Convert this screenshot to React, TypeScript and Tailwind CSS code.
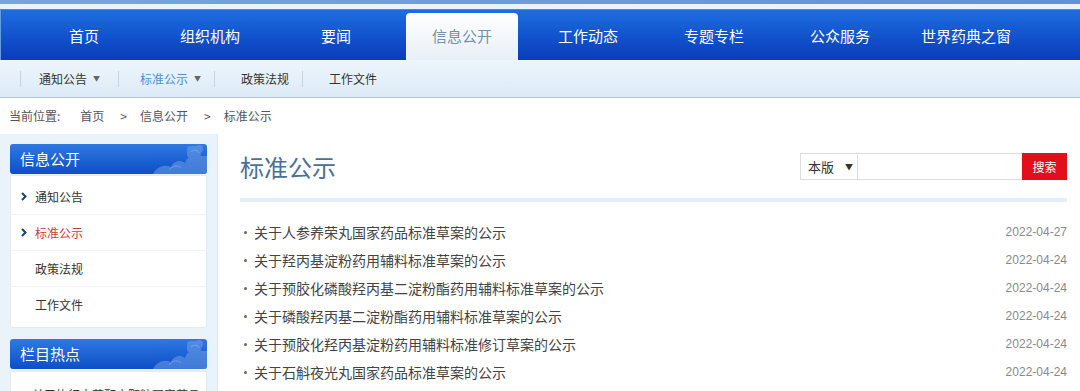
const navItems = ['首页', '组织机构', '要闻', '信息公开', '工作动态', '专题专栏', '公众服务', '世界药典之窗'];

const news = [
  { title: '关于人参养荣丸国家药品标准草案的公示', date: '2022-04-27' },
  { title: '关于羟丙基淀粉药用辅料标准草案的公示', date: '2022-04-24' },
  { title: '关于预胶化磷酸羟丙基二淀粉酯药用辅料标准草案的公示', date: '2022-04-24' },
  { title: '关于磷酸羟丙基二淀粉酯药用辅料标准草案的公示', date: '2022-04-24' },
  { title: '关于预胶化羟丙基淀粉药用辅料标准修订草案的公示', date: '2022-04-24' },
  { title: '关于石斛夜光丸国家药品标准草案的公示', date: '2022-04-24' },
];

const sideItems = [
  { label: '通知公告', arrow: true, active: false },
  { label: '标准公示', arrow: true, active: true },
  { label: '政策法规', arrow: false, active: false },
  { label: '工作文件', arrow: false, active: false },
];

function Cloud() {
  return (
    <svg width="60" height="30" viewBox="0 0 60 30" className="absolute right-0 top-0">
      <g fill="#6d9fe8" opacity="0.55">
        <path d="M6 30 C10 22 18 20 24 23 C26 17 34 15 38 19 C40 12 48 8 54 12 L60 12 L60 30 Z" />
        <rect x="40" y="2" width="14" height="12" rx="4" />
        <circle cx="52" cy="5" r="4" />
      </g>
      <g fill="none" stroke="#8fb6ee" strokeWidth="1" opacity="0.6">
        <path d="M22 26 C26 21 31 21 34 24" />
        <path d="M44 8 C47 5 51 6 52 9" />
      </g>
    </svg>
  );
}

function Chevron() {
  return (
    <svg width="6" height="9" viewBox="0 0 6 9">
      <path d="M1 1 L4.5 4.5 L1 8" fill="none" stroke="#1c3f78" strokeWidth="2" />
    </svg>
  );
}

function SideHeader({ title }: { title: string }) {
  return (
    <div className="relative flex h-[30px] items-center overflow-hidden rounded-[3px] bg-gradient-to-b from-[#2f79e2] to-[#0f4ec6] pl-[10px] text-[15px] text-white">
      {title}
      <Cloud />
    </div>
  );
}

function Caret() {
  return <span className="ml-[6px] text-[7px] text-[#666]">▼</span>;
}

export default function App() {
  return (
    <div
      className="h-[391px] w-[1080px] overflow-hidden bg-white"
      style={{ fontFamily: '"Noto Sans CJK SC", "Liberation Sans", sans-serif' }}
    >
      {/* top strip */}
      <div className="h-[4px] bg-gradient-to-r from-[#79a5dc] to-[#5f92d6]" />
      <div className="h-[5px] bg-[#e8f3fc]" />
      <div className="h-[1px] bg-[#4f86d0]" />

      {/* main nav */}
      <div className="flex h-[50px] items-end border-l border-[#6a9ae0] bg-gradient-to-b from-[#1f6ce0] to-[#0b3bbb] px-[20px]">
        {navItems.map((n) => (
          <div key={n} className="flex h-[47px] w-[126px] justify-center">
            {n === '信息公开' ? (
              <div className="flex w-[112px] items-center justify-center rounded-t-[4px] bg-gradient-to-b from-white to-[#e9eff6] text-[15px] text-[#7290b2]">
                {n}
              </div>
            ) : (
              <div className="flex items-center text-[15px] text-white">{n}</div>
            )}
          </div>
        ))}
      </div>

      {/* sub nav */}
      <div className="flex h-[38px] items-center border-b border-[#b3c7dc] bg-gradient-to-b from-[#eef6fd] to-[#dceaf7] pl-[20px] text-[12px] text-[#333]">
        <span className="h-[16px] w-px bg-[#c4d4e4]" />
        <span className="ml-[18px] flex items-center">通知公告<Caret /></span>
        <span className="ml-[18px] h-[16px] w-px bg-[#c4d4e4]" />
        <span className="ml-[21px] flex items-center text-[#4a92d4]">标准公示<Caret /></span>
        <span className="ml-[13px] h-[16px] w-px bg-[#c4d4e4]" />
        <span className="ml-[26px]">政策法规</span>
        <span className="ml-[13px] h-[16px] w-px bg-[#c4d4e4]" />
        <span className="ml-[26px]">工作文件</span>
      </div>

      {/* breadcrumb */}
      <div className="flex h-[36px] items-center pl-[9px] text-[12px] text-[#555]">
        <span>当前位置:</span>
        <span className="ml-[20px]">首页</span>
        <span className="ml-[16px]">&gt;</span>
        <span className="ml-[13px]">信息公开</span>
        <span className="ml-[16px]">&gt;</span>
        <span className="ml-[13px]">标准公示</span>
      </div>

      {/* body */}
      <div className="flex">
        {/* sidebar */}
        <div className="w-[218px] shrink-0 border-r border-[#dbe7f3] bg-[#eaf2fa] px-[10px] pt-[10px]">
          <SideHeader title="信息公开" />
          <div className="mt-[1px] rounded-b-[3px] border border-[#e2eaf3] bg-white pb-[4px] pt-[3px]">
            {sideItems.map((s, i) => (
              <div
                key={s.label}
                className={`flex h-[36px] items-center pl-[10px] text-[12px] ${i < 3 ? 'border-b border-[#f0f3f7]' : ''}`}
              >
                <span className="flex w-[14px] items-center">{s.arrow ? <Chevron /> : null}</span>
                <span className={s.active ? 'text-[#d23a3a]' : 'text-[#333]'}>{s.label}</span>
              </div>
            ))}
          </div>
          <div className="mt-[11px]">
            <SideHeader title="栏目热点" />
          </div>
          <div className="mt-[2px] border border-[#e2eaf3] bg-white pt-[14px]">
            <div className="flex items-center pl-[10px] text-[12px] text-[#333]">
              <span className="mr-[8px] h-[3px] w-[3px] rounded-full bg-[#666]" />
              关于执行中药配方颗粒国家药品
            </div>
          </div>
        </div>

        {/* content */}
        <div className="flex-1 pl-[22px] pr-[13px] pt-[18px]">
          <div className="flex h-[29px] items-center justify-between">
            <div className="text-[24px] leading-none text-[#4a7099]">标准公示</div>
            <div className="flex h-[27px]">
              <div className="flex w-[58px] items-center border border-[#dcdcdc] pl-[7px] text-[13px] text-[#333]">
                本版<span className="ml-[11px] text-[8px]">▼</span>
              </div>
              <div className="w-[164px] border-y border-[#dcdcdc] bg-white" />
              <div className="flex w-[45px] items-center justify-center bg-[#e0101d] text-[12px] text-white">搜索</div>
            </div>
          </div>
          <div className="mt-[17px] h-[4px] bg-[#e5eef9]" />
          <div className="mt-[16px]">
            {news.map((n) => (
              <div key={n.title} className="flex h-[28px] items-center justify-between">
                <div className="flex items-center text-[14px] text-[#444]">
                  <span className="ml-[4px] mr-[7px] h-[3px] w-[3px] rounded-full bg-[#666]" />
                  {n.title}
                </div>
                <div
                  className="text-[12px] text-[#8a8a8a]"
                  style={{ fontFamily: '"Liberation Sans", sans-serif' }}
                >
                  {n.date}
                </div>
              </div>
            ))}
          </div>
        </div>
      </div>
    </div>
  );
}
